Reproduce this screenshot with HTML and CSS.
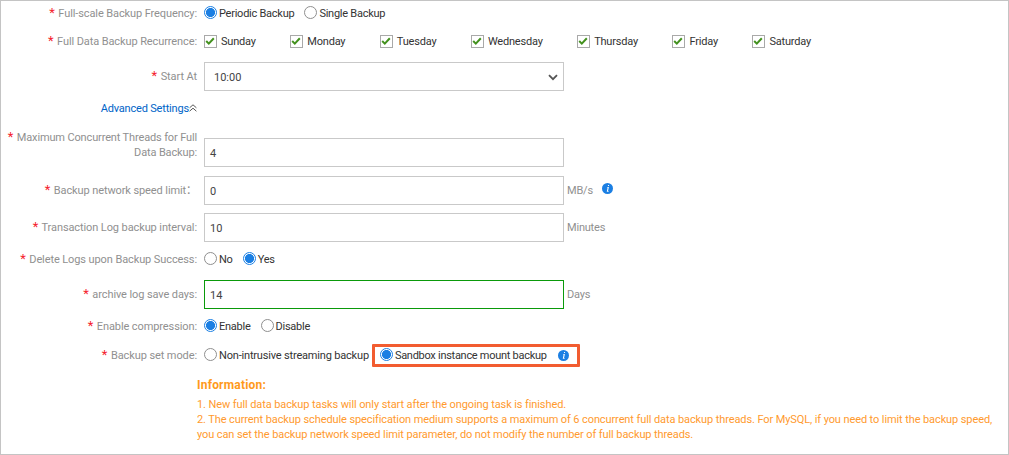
FILE: index.html
```html
<!DOCTYPE html>
<html lang="en">
<head>
<meta charset="utf-8">
<title>Backup settings</title>
<link rel="stylesheet" href="styles.css">
</head>
<body>
<form class="panel">
  <div class="row h-freq">
    <div class="label"><span class="req">*</span> Full-scale Backup Frequency:</div>
    <div class="ctrl">
      <label class="opt"><input class="radio" type="radio" name="freq" checked>Periodic Backup</label>
      <label class="opt"><input class="radio" type="radio" name="freq">Single Backup</label>
    </div>
  </div>
  <div class="row h-rec">
    <div class="label"><span class="req">*</span> Full Data Backup Recurrence:</div>
    <div class="ctrl days">
      <label class="day"><span class="check"><svg viewBox="0 0 11 11"><path d="M1.2 5 3.8 7.6 8.8 2.2" /></svg></span>Sunday</label>
      <label class="day"><span class="check"><svg viewBox="0 0 11 11"><path d="M1.2 5 3.8 7.6 8.8 2.2" /></svg></span>Monday</label>
      <label class="day"><span class="check"><svg viewBox="0 0 11 11"><path d="M1.2 5 3.8 7.6 8.8 2.2" /></svg></span>Tuesday</label>
      <label class="day"><span class="check"><svg viewBox="0 0 11 11"><path d="M1.2 5 3.8 7.6 8.8 2.2" /></svg></span>Wednesday</label>
      <label class="day"><span class="check"><svg viewBox="0 0 11 11"><path d="M1.2 5 3.8 7.6 8.8 2.2" /></svg></span>Thursday</label>
      <label class="day"><span class="check"><svg viewBox="0 0 11 11"><path d="M1.2 5 3.8 7.6 8.8 2.2" /></svg></span>Friday</label>
      <label class="day"><span class="check"><svg viewBox="0 0 11 11"><path d="M1.2 5 3.8 7.6 8.8 2.2" /></svg></span>Saturday</label>
    </div>
  </div>
  <div class="row h-start">
    <div class="label"><span class="req">*</span> Start At</div>
    <div class="ctrl">
      <div class="box select">10:00
        <svg class="chev" viewBox="0 0 10 7"><path d="M1 1.2 5 5.2 9 1.2" /></svg>
      </div>
    </div>
  </div>
  <div class="row h-adv">
    <div class="label adv">Advanced Settings<svg class="dchev" viewBox="0 0 8 8"><path d="M.6 3.8 4 .8 7.4 3.8M.6 7.2 4 4.2 7.4 7.2" /></svg></div>
  </div>
  <div class="row h-threads">
    <div class="label two"><span class="req">*</span> Maximum Concurrent Threads for Full Data Backup:</div>
    <div class="ctrl"><div class="box">4</div></div>
  </div>
  <div class="row h-speed">
    <div class="label"><span class="req">*</span> Backup network speed limit：</div>
    <div class="ctrl">
      <div class="box">0</div>
      <span class="unit">MB/s</span>
      <svg class="info info-speed" viewBox="0 0 12 12"><circle cx="6" cy="6" r="6" /><path d="M6.7 2.1h1.2L7.6 3.3H6.4ZM6.2 4.4h1.3L6.6 8.6h.7l-.2.9H5.2L6.1 5.3h-.7Z" /></svg>
    </div>
  </div>
  <div class="row h-log">
    <div class="label"><span class="req">*</span> Transaction Log backup interval:</div>
    <div class="ctrl">
      <div class="box">10</div>
      <span class="unit">Minutes</span>
    </div>
  </div>
  <div class="row h-del">
    <div class="label"><span class="req">*</span> Delete Logs upon Backup Success:</div>
    <div class="ctrl">
      <label class="opt"><input class="radio" type="radio" name="del">No</label>
      <label class="opt"><input class="radio" type="radio" name="del" checked>Yes</label>
    </div>
  </div>
  <div class="row h-arch">
    <div class="label"><span class="req">*</span> archive log save days:</div>
    <div class="ctrl">
      <div class="box ok">14</div>
      <span class="unit">Days</span>
    </div>
  </div>
  <div class="row h-comp">
    <div class="label"><span class="req">*</span> Enable compression:</div>
    <div class="ctrl">
      <label class="opt"><input class="radio" type="radio" name="comp" checked>Enable</label>
      <label class="opt"><input class="radio" type="radio" name="comp">Disable</label>
    </div>
  </div>
  <div class="row h-mode">
    <div class="label"><span class="req">*</span> Backup set mode:</div>
    <div class="ctrl">
      <label class="opt opt-plain"><input class="radio" type="radio" name="mode">Non-intrusive streaming backup</label>
      <div class="mark">
        <label class="opt"><input class="radio" type="radio" name="mode" checked>Sandbox instance mount backup</label>
        <svg class="info" viewBox="0 0 12 12"><circle cx="6" cy="6" r="6" /><path d="M6.7 2.1h1.2L7.6 3.3H6.4ZM6.2 4.4h1.3L6.6 8.6h.7l-.2.9H5.2L6.1 5.3h-.7Z" /></svg>
      </div>
    </div>
  </div>
  <div class="notes">
    <p class="notes-title">Information:</p>
    <p>1. New full data backup tasks will only start after the ongoing task is finished.</p>
    <p>2. The current backup schedule specification medium supports a maximum of 6 concurrent full data backup threads. For MySQL, if you need to limit the backup speed, you can set the backup network speed limit parameter, do not modify the number of full backup threads.</p>
  </div>
</form>
</body>
</html>
```

FILE: styles.css
```css
* { box-sizing: border-box; }
html, body { margin: 0; padding: 0; background: #fff; }
body {
  width: 1009px;
  height: 455px;
  overflow: hidden;
  font-family: Roboto, "Liberation Sans", "Noto Sans CJK SC", sans-serif;
  font-size: 11px;
  color: #333;
}
.panel {
  height: 455px;
  border: 1px solid #c4c4c4;
  display: flex;
  flex-direction: column;
}
.row {
  display: grid;
  grid-template-columns: 196px 1fr;
  column-gap: 7px;
  align-items: center;
}
.label { text-align: right; color: #909090; line-height: 15px; letter-spacing: -.1px; }
.two { margin-top: -16px; padding-left: 6px; letter-spacing: -.14px; }
.req { color: #f5222d; font-size: 13px; line-height: 10px; margin-right: 1px; }
.ctrl { display: flex; align-items: center; }
.h-freq { height: 25px; }
.h-rec { height: 31px; }
.h-start { height: 38px; }
.h-adv { height: 26px; }
.h-threads { height: 50px; padding-top: 13px; }
.h-speed { height: 39px; }
.h-log { height: 35px; }
.h-del { height: 28px; }
.h-arch { height: 43px; }
.h-comp { height: 21px; }
.h-mode { height: 37px; }
.adv { color: #0064c8; display: flex; align-items: center; justify-content: flex-end; grid-column: 1; letter-spacing: -.18px; }
.dchev { width: 8px; height: 8px; fill: none; stroke: #444; stroke-width: .9; }
.opt { display: inline-flex; align-items: center; color: #333; margin-right: 10px; letter-spacing: -.25px; }
.opt-plain { letter-spacing: -.18px; margin-right: 9px; }
.radio {
  appearance: none;
  width: 13px;
  height: 13px;
  margin: -2px 2px 0 0;
  border: 1px solid #8f8f8f;
  border-radius: 50%;
  background: #fff;
  flex: none;
}
.radio:checked {
  border-color: #1b7fe3;
  background: radial-gradient(circle, #1b7fe3 0 4.2px, #fff 4.9px);
}
.days { gap: 34.5px; }
.day { display: inline-flex; align-items: center; color: #333; letter-spacing: -.2px; }
.check {
  width: 13px;
  height: 13px;
  margin-right: 4px;
  border: 1px solid #a9a9a9;
  background: #fff;
  display: flex;
}
.check svg { width: 11px; height: 11px; fill: none; stroke: #43911e; stroke-width: 2; }
.box {
  width: 360px;
  height: 29px;
  flex: none;
  border: 1px solid #c9c9c9;
  padding: 2px 5px 0;
  display: flex;
  align-items: center;
  color: #444;
}
.box.ok { border-color: #0a9a0a; }
.select { justify-content: space-between; padding-left: 9px; }
.chev { width: 10px; height: 7px; fill: none; stroke: #555; stroke-width: 1.8; }
.unit { margin-left: 3px; color: #909090; letter-spacing: -.2px; }
.info { width: 11px; height: 11px; flex: none; }
.info circle { fill: #1b7fe3; }
.info path { fill: #fff; }
.info-speed { margin-left: 9px; margin-top: -4px; }
.mark {
  display: flex;
  align-items: center;
  height: 23px;
  margin-left: -6px;
  padding: 0 8px 0 5px;
  border: 3px solid #f25c30;
  border-radius: 1px;
}
.mark .opt { margin-right: 11px; letter-spacing: -.28px; }
.notes {
  margin-left: 196px;
  padding: 4px 10px 0 0;
  color: #ff9a2e;
  line-height: 15px;
  letter-spacing: -.1px;
}
.notes p { margin: 0; }
.notes .notes-title { font-size: 12px; font-weight: 700; margin-bottom: 4px; color: #ff9a1a; letter-spacing: .2px; }
```
